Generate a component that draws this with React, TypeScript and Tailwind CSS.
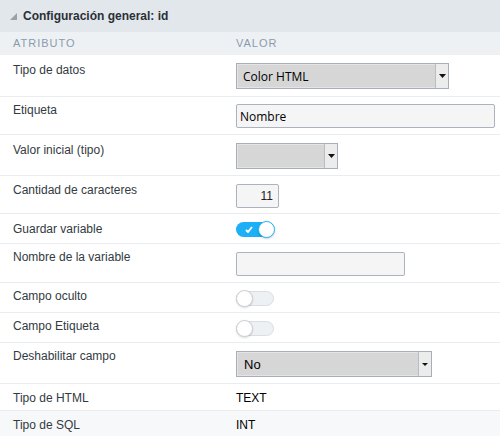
import React from "react";

type RowProps = {
  label: string;
  h: string;
  labelPad?: string;
  valuePad?: string;
  bg?: string;
  children?: React.ReactNode;
};

const Row = ({ label, h, labelPad = "pt-2", valuePad = "pt-2", bg = "bg-white", children }: RowProps) => (
  <div className={`flex border-b border-[#e9edf2] ${h} ${bg}`}>
    <div className={`w-[236px] shrink-0 pl-[13px] text-[12px] leading-[15px] text-[#333a42] ${labelPad}`}>{label}</div>
    <div className={`flex-1 text-[12px] leading-[15px] ${valuePad}`}>{children}</div>
  </div>
);

const Select = ({ value, w }: { value: string; w: string }) => (
  <div className={`flex h-[26px] ${w} border border-[#a7aeb8] bg-[#d6d6d6] shadow-[inset_0_0_0_1px_#e4e4e4]`}>
    <div className="flex flex-1 items-center pl-[6px] text-[12px] text-black [font-family:'Open_Sans','Noto_Sans',sans-serif]">
      {value}
    </div>
    <div className="flex w-[13px] items-center justify-center border-l border-[#b9bec5] bg-[#ececec]">
      <svg width="7" height="4" viewBox="0 0 7 4">
        <polygon points="0,0 7,0 3.5,4" fill="#111" />
      </svg>
    </div>
  </div>
);

const Toggle = ({ on }: { on: boolean }) =>
  on ? (
    <div className="relative flex h-[15px] w-[38px] items-center rounded-full bg-[#1eb0f6]">
      <svg className="ml-[9px]" width="8" height="7" viewBox="0 0 8 7">
        <path d="M1 4 L3 6 L7 1" stroke="#fff" strokeWidth="1.8" fill="none" />
      </svg>
      <div className="absolute right-[-1px] top-[-1px] h-[17px] w-[17px] rounded-full border border-[#1eb0f6] bg-white shadow-[0_1px_2px_rgba(0,0,0,0.2)]" />
    </div>
  ) : (
    <div className="relative h-[15px] w-[38px] rounded-full border border-[#d9dee3] bg-[#eef1f4]">
      <div className="absolute left-[-1px] top-[-2px] h-[17px] w-[17px] rounded-full border border-[#c9ced4] bg-white shadow-[0_1px_2px_rgba(0,0,0,0.15)]" />
    </div>
  );

export default function App() {
  return (
    <div className="h-[436px] w-[500px] overflow-hidden bg-white [font-family:'Liberation_Sans',Arial,sans-serif]">
      <div className="flex h-[32px] items-center bg-[#e2e7ec] pl-[10px]">
        <svg width="7" height="7" viewBox="0 0 7 7" className="mr-[6px] mt-[1px]">
          <polygon points="7,0 7,7 0,7" fill="#9aa1a9" />
        </svg>
        <span className="text-[12px] font-bold text-[#2b3036]">Configuración general: id</span>
      </div>
      <div className="flex h-[23px] items-center bg-[#eef1f4] text-[11px] tracking-[1px] text-[#8a9bae]">
        <div className="w-[236px] pl-[13px]">ATRIBUTO</div>
        <div>VALOR</div>
      </div>

      <Row label="Tipo de datos" h="h-[42px]" labelPad="pt-[8px]">
        <Select value="Color HTML" w="w-[213px]" />
      </Row>
      <Row label="Etiqueta" h="h-[38px]" labelPad="pt-[6px]" valuePad="pt-[7px]">
        <div className="flex h-[24px] w-[259px] items-center rounded-[2px] border border-[#abb3be] bg-[#f5f5f5] pl-[3px] text-[12px] text-black [font-family:'Open_Sans','Noto_Sans',sans-serif]">
          Nombre
        </div>
      </Row>
      <Row label="Valor inicial (tipo)" h="h-[41px]" labelPad="pt-[8px]">
        <Select value="" w="w-[102px]" />
      </Row>
      <Row label="Cantidad de caracteres" h="h-[38px]" labelPad="pt-[7px]">
        <div className="flex h-[24px] w-[43px] items-center justify-end rounded-[2px] border border-[#abb3be] bg-[#f5f5f5] pr-[5px] text-[12px] text-[#222]">
          11
        </div>
      </Row>
      <Row label="Guardar variable" h="h-[30px]" labelPad="pt-[8px]" valuePad="pt-[8px]">
        <Toggle on />
      </Row>
      <Row label="Nombre de la variable" h="h-[39px]" labelPad="pt-[6px]">
        <div className="h-[24px] w-[169px] rounded-[2px] border border-[#abb3be] bg-[#f5f5f5]" />
      </Row>
      <Row label="Campo oculto" h="h-[30px]" labelPad="pt-[6px]" valuePad="pt-[8px]">
        <Toggle on={false} />
      </Row>
      <Row label="Campo Etiqueta" h="h-[30px]" labelPad="pt-[6px]" valuePad="pt-[8px]">
        <Toggle on={false} />
      </Row>
      <Row label="Deshabilitar campo" h="h-[41px]" labelPad="pt-[6px]">
        <div className="flex h-[26px] w-[196px] border border-[#a7aeb8] bg-[#d6d6d6] shadow-[inset_0_0_0_1px_#e4e4e4]">
          <div className="flex flex-1 items-center pl-[7px] text-[13px] text-black">No</div>
          <div className="flex w-[13px] items-center justify-center border-l border-[#b9bec5] bg-[#ececec]">
            <svg width="6" height="3" viewBox="0 0 6 3">
              <polygon points="0,0 6,0 3,3" fill="#111" />
            </svg>
          </div>
        </div>
      </Row>
      <Row label="Tipo de HTML" h="h-[27px]" labelPad="pt-[7px]" valuePad="pt-[7px]">
        <span className="text-black">TEXT</span>
      </Row>
      <Row label="Tipo de SQL" h="h-[26px]" labelPad="pt-[7px]" valuePad="pt-[7px]" bg="bg-[#f7f8fa]">
        <span className="text-black">INT</span>
      </Row>
    </div>
  );
}
